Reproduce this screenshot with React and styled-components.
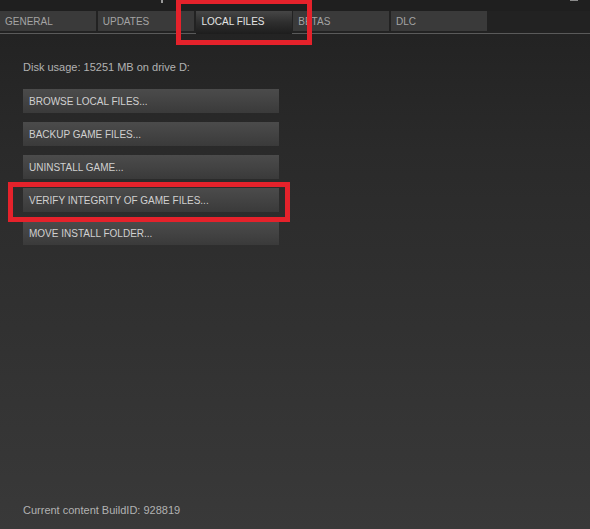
import React from "react";
import styled, { createGlobalStyle } from "styled-components";

const Global = createGlobalStyle`
  html, body { margin: 0; padding: 0; background: #262626; }
  body { font-family: "Liberation Sans", Arial, sans-serif; }
  #root { min-height: 529px; }
`;

const Window = styled.div`
  position: relative;
  width: 590px;
  height: 529px;
  overflow: hidden;
  display: flex;
  flex-direction: column;
  background: linear-gradient(180deg, #202020 0px, #232323 34px, #2a2a2a 150px, #393939 529px);
`;

const TitleBar = styled.div`
  height: 11px;
  flex: none;
  display: flex;
  align-items: flex-start;
  background: #1f1f1f;
`;

const TitleMark = styled.span`
  margin-left: 161px;
  width: 2px;
  height: 3px;
  background: #9a9a9a;
`;

const CloseMark = styled.span`
  margin-left: auto;
  margin-right: 12px;
  width: 8px;
  height: 1px;
  background: #8a8a8a;
`;

const TabBar = styled.div`
  display: flex;
  gap: 1.75px;
  height: 22px;
  flex: none;
  border-bottom: 1px solid #5a5a5a;
  background: #222;
`;

const Tab = styled.div`
  width: 96px;
  height: ${(p) => (p.$active ? "23px" : "20px")};
  margin-bottom: ${(p) => (p.$active ? "-1px" : "0")};
  box-sizing: border-box;
  padding-left: ${(p) => (p.$active ? "6px" : "5px")};
  display: flex;
  align-items: ${(p) => (p.$active ? "flex-start" : "center")};
  padding-top: ${(p) => (p.$active ? "5px" : "0")};
  font-size: 10px;
  color: ${(p) => (p.$active ? "#e4e4e4" : "#a4a4a4")};
  background: ${(p) =>
    p.$active
      ? "linear-gradient(180deg, #464646 0%, #2e2e2e 50%, #1d1d1d 100%)"
      : "#3a3a3a"};
  white-space: nowrap;
`;

const Content = styled.div`
  flex: 1;
  display: flex;
  flex-direction: column;
  padding: 27px 0 12px 23px;
`;

const InfoText = styled.div`
  font-size: 11px;
  line-height: 13px;
  color: #b2b2b2;
`;

const ButtonList = styled.div`
  display: flex;
  flex-direction: column;
  gap: 9px;
  margin-top: 15px;
`;

const ActionButton = styled.div`
  width: 256px;
  height: 24px;
  box-sizing: border-box;
  padding-left: 6px;
  display: flex;
  align-items: center;
  font-size: 10px;
  color: #d0d0d0;
  background: linear-gradient(180deg, #4b4b4b 0%, #434343 50%, #3a3a3a 100%);
  white-space: nowrap;
`;

const Footer = styled(InfoText)`
  margin-top: auto;
`;

const Highlight = styled.div`
  position: absolute;
  box-sizing: border-box;
  border: 5px solid #e5222b;
  pointer-events: none;
`;

const tabs = ["GENERAL", "UPDATES", "LOCAL FILES", "BETAS", "DLC"];
const actions = [
  "BROWSE LOCAL FILES...",
  "BACKUP GAME FILES...",
  "UNINSTALL GAME...",
  "VERIFY INTEGRITY OF GAME FILES...",
  "MOVE INSTALL FOLDER...",
];

export default function App() {
  return (
    <>
      <Global />
      <Window>
        <TitleBar>
          <TitleMark />
          <CloseMark />
        </TitleBar>
        <TabBar>
          {tabs.map((t) => (
            <Tab key={t} $active={t === "LOCAL FILES"}>
              {t}
            </Tab>
          ))}
        </TabBar>
        <Content>
          <InfoText>Disk usage: 15251 MB on drive D:</InfoText>
          <ButtonList>
            {actions.map((a) => (
              <ActionButton key={a}>{a}</ActionButton>
            ))}
          </ButtonList>
          <Footer>Current content BuildID: 928819</Footer>
        </Content>
        <Highlight style={{ left: 176, top: -1, width: 136, height: 46 }} />
        <Highlight style={{ left: 8, top: 182, width: 282, height: 40 }} />
      </Window>
    </>
  );
}
